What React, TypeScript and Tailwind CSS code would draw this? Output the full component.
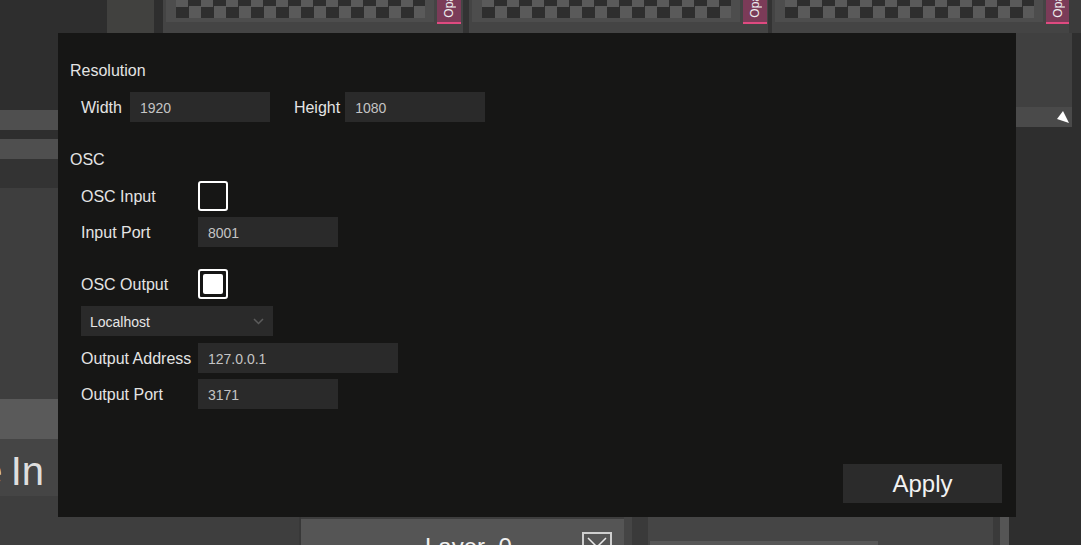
import type { ReactNode } from "react";

const checker =
  "bg-[image:repeating-conic-gradient(#2e2e2e_0_25%,#5a5a5a_0_50%)] bg-[length:25px_25px] bg-[position:0_-6px]";

function ClipSlot({ w }: { w: string }) {
  return (
    <div className={`flex h-full shrink-0 flex-col overflow-hidden bg-[#444444] ${w}`}>
      <div className="flex h-[24px]">
        <div className="ml-[3px] flex h-[22px] w-[268px] shrink-0 bg-[#4d4d4d] pl-[10px]">
          <div className={`h-[18px] w-[249px] ${checker}`} />
        </div>
        {/* opacity tab, label runs bottom-to-top and is cut at the top */}
        <div className="relative ml-[3px] h-[24px] w-[24px] shrink-0 overflow-hidden border-b-2 border-[#df4a80] bg-[#7b3b58]">
          <span className="absolute bottom-[4px] left-[5px] rotate-180 whitespace-nowrap text-[12px] leading-[14px] text-[#eee] [writing-mode:vertical-rl]">
            Opacity
          </span>
        </div>
      </div>
    </div>
  );
}

function TopStrip() {
  return (
    <div className="flex h-[33px] shrink-0">
      <div className="w-[107px] bg-[#2e2e2e]" />
      <div className="w-[47px] bg-[#41413f]" />
      <div className="w-[9px] bg-[#2e2e2e]" />
      <ClipSlot w="w-[300px]" />
      <div className="w-[6px] bg-[#333333]" />
      <ClipSlot w="w-[299px]" />
      <div className="w-[4px] bg-[#333333]" />
      <ClipSlot w="w-[297px]" />
      <div className="flex-1 bg-[#3b3b3b]" />
    </div>
  );
}

function LeftColumn() {
  return (
    <div className="flex w-[58px] shrink-0 flex-col">
      <div className="h-[77px] bg-[#2e2e2e]" />
      <div className="h-[20px] bg-[#4f4f4f]" />
      <div className="h-[9px] bg-[#2e2e2e]" />
      <div className="h-[20px] bg-[#4f4f4f]" />
      <div className="h-[29px] bg-[#333333]" />
      <div className="h-[211px] bg-[#3e3e3e]" />
      <div className="h-[40px] bg-[#5a5a5a]" />
      <div className="flex h-[57px] items-center justify-end overflow-hidden bg-[#454545] pr-[14px] pt-[6px]">
        <span className="shrink-0 whitespace-nowrap text-[40px] leading-none text-[#dedede] [word-spacing:-3px]">
          Fade In
        </span>
      </div>
      <div className="flex-1 bg-[#3e3e3e]" />
    </div>
  );
}

function RightColumn() {
  return (
    <div className="flex w-[65px] shrink-0 flex-col bg-[#2e2e2e]">
      <div className="h-[74px] w-[56px] bg-[#404040]" />
      <div className="flex h-[20px] w-[56px] items-center bg-[#4a4a4a] pl-[41px]">
        <svg width="12" height="12" viewBox="0 0 12 12">
          <polygon points="6,0 0,8 12,12" fill="#fff" />
        </svg>
      </div>
    </div>
  );
}

function Field({ value, w }: { value: string; w: string }) {
  return (
    <div className={`flex h-[30px] shrink-0 items-center bg-[#2a2a2a] pl-[10px] pt-px text-[14px] text-[#c4c4c4] ${w}`}>
      {value}
    </div>
  );
}

function Check({ on }: { on?: boolean }) {
  return (
    <div className="h-[30px] w-[30px] rounded-[3px] border-2 border-white">
      {on && <div className="m-[3px] h-[20px] w-[20px] rounded-[2px] bg-white" />}
    </div>
  );
}

function Row({ label, children, className = "" }: { label: string; children: ReactNode; className?: string }) {
  return (
    <div className={`flex items-center ${className}`}>
      <span className="w-[117px] shrink-0 pt-[2px]">{label}</span>
      {children}
    </div>
  );
}

function SettingsDialog() {
  return (
    <section className="flex h-full w-[958px] shrink-0 flex-col bg-[#161615] pb-[14px] pl-[12px] pr-[14px] pt-[28px] text-[16px] leading-[20px] text-[#e4e4e4]">
      <h2>Resolution</h2>
      <div className="mt-[11px] flex items-center pl-[11px]">
        <span className="pt-[2px]">Width</span>
        <Field value="1920" w="ml-[8px] w-[140px]" />
        <span className="ml-[24px] pt-[2px]">Height</span>
        <Field value="1080" w="ml-[5px] w-[140px]" />
      </div>

      <h2 className="mt-[28px]">OSC</h2>
      <div className="flex flex-col pl-[11px]">
        <Row label="OSC Input" className="mt-[11px]">
          <Check />
        </Row>
        <Row label="Input Port" className="mt-[6px]">
          <Field value="8001" w="w-[140px]" />
        </Row>
        <Row label="OSC Output" className="mt-[22px]">
          <Check on />
        </Row>
        <div className="mt-[7px] flex h-[30px] w-[192px] items-center justify-between bg-[#2a2a2a] pl-[9px] pr-[9px] pt-px text-[14px] text-[#e6e6e6]">
          Localhost
          <svg width="11" height="7" viewBox="0 0 11 7">
            <polyline points="1,1 5.5,5.5 10,1" fill="none" stroke="#5c5c5c" strokeWidth="1.5" />
          </svg>
        </div>
        <Row label="Output Address" className="mt-[7px]">
          <Field value="127.0.0.1" w="w-[200px]" />
        </Row>
        <Row label="Output Port" className="mt-[6px]">
          <Field value="3171" w="w-[140px]" />
        </Row>
      </div>

      <div className="mt-auto flex justify-end">
        <button className="h-[39px] w-[159px] bg-[#2b2b2b] pt-px text-[24px] text-[#f2f2f2]">Apply</button>
      </div>
    </section>
  );
}

function BottomStrip() {
  return (
    <div className="flex h-[28px] shrink-0">
      <div className="w-[299px] bg-[#3e3e3e]" />
      <div className="w-[2px] bg-[#383838]" />
      <div className="w-[323px] bg-[#3e3e3e] pt-[2px]">
        <div className="flex h-full items-start justify-between bg-[#555555] pl-[124px] pr-[12px] pt-[13px]">
          <span className="mt-[3px] text-[24px] leading-[24px] text-[#f0f0f0]">Layer_0</span>
          <div className="h-[30px] w-[30px] border-2 border-[#cfcfcf]">
            <svg width="26" height="26" viewBox="0 0 26 26">
              <path d="M4 4 L22 22 M22 4 L4 22" stroke="#e8e8e8" strokeWidth="1.5" />
            </svg>
          </div>
        </div>
      </div>
      <div className="w-[8px] bg-[#454545]" />
      <div className="w-[16px] bg-[#3a3a3a]" />
      <div className="flex w-[345px] flex-col justify-end bg-[#454545] pl-[2px]">
        <div className="h-[4px] w-[228px] bg-[#575757]" />
      </div>
      <div className="w-[7px] bg-[#3a3a3a]" />
      <div className="w-[9px] bg-[#555555]" />
      <div className="flex-1 bg-[#2e2e2e]" />
    </div>
  );
}

export default function App() {
  return (
    <div className="flex h-[545px] w-[1081px] flex-col overflow-hidden bg-[#2e2e2e] font-['Liberation_Sans',Arial,sans-serif]">
      <TopStrip />
      <div className="flex h-[484px] shrink-0">
        <LeftColumn />
        <SettingsDialog />
        <RightColumn />
      </div>
      <BottomStrip />
    </div>
  );
}
